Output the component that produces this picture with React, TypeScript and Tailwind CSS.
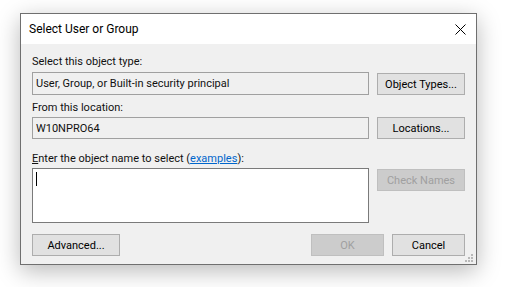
import React from 'react';

const font = { fontFamily: 'Roboto, "Liberation Sans", sans-serif' };

function Button({ label, disabled, className }: { label: React.ReactNode; disabled?: boolean; className?: string }) {
  return (
    <div
      className={
        'flex items-center justify-center border text-[11px] leading-none ' +
        (disabled
          ? 'bg-[#cccccc] border-[#bfbfbf] text-[#a0a0a0] '
          : 'bg-[#e1e1e1] border-[#adadad] text-black ') +
        (className ?? '')
      }
    >
      {label}
    </div>
  );
}

function ResizeGrip() {
  const dots = [
    [6, 0],
    [3, 3],
    [6, 3],
    [0, 6],
    [3, 6],
    [6, 6],
  ];
  return (
    <svg width="8" height="8" className="absolute right-[3px] bottom-[2px]">
      {dots.map(([x, y]) => (
        <rect key={`${x}-${y}`} x={x} y={y} width="2" height="2" fill="#b8b8b8" />
      ))}
    </svg>
  );
}

export default function App() {
  return (
    <div className="w-[512px] h-[287px] bg-white overflow-hidden pt-[13px] pl-[20px]" style={font}>
      <div className="relative w-[457px] h-[252px] border border-[#6f6f6f] bg-[#f0f0f0] shadow-[0_6px_22px_rgba(0,0,0,0.28)] flex flex-col">
        {/* title bar */}
        <div className="h-[30px] bg-white flex items-center justify-between pl-[8px] pr-[8px]">
          <span className="text-[12px] text-black">Select User or Group</span>
          <svg width="11" height="11" viewBox="0 0 11 11" className="mr-[2px]">
            <path d="M0.5 0.5 L10.5 10.5 M10.5 0.5 L0.5 10.5" stroke="#000" strokeWidth="1" />
          </svg>
        </div>

        <div className="flex flex-col px-[11px] pt-[10px] text-[11px] text-[#111]">
          <div className="leading-[15px]">Select this object type:</div>
          <div className="mt-[3px] flex gap-[8px]">
            <div className="w-[337px] h-[23px] border border-[#a0a0a0] bg-[#f0f0f0] flex items-center px-[3px] leading-none">
              User, Group, or Built-in security principal
            </div>
            <Button label="Object Types..." className="w-[88px] h-[22px] mt-[1px]" />
          </div>

          <div className="mt-[5px] leading-[15px]">From this location:</div>
          <div className="mt-[2px] flex gap-[8px]">
            <div className="w-[337px] h-[22px] border border-[#a0a0a0] bg-[#f0f0f0] flex items-center px-[3px] leading-none">
              W10NPRO64
            </div>
            <Button label="Locations..." className="w-[88px] h-[22px]" />
          </div>

          <div className="mt-[12px] leading-[15px]">
            <span className="underline">E</span>nter the object name to select (
            <span className="text-[#0066cc] underline">examples</span>):
          </div>
          <div className="mt-[2px] flex gap-[8px] items-start">
            <div className="w-[337px] h-[55px] border border-[#7a7a7a] bg-white pl-[3px] pt-[3px]">
              <div className="w-px h-[14px] bg-black" />
            </div>
            <Button label="Check Names" disabled className="w-[88px] h-[22px] mt-[1px]" />
          </div>

          <div className="mt-[11px] flex items-center">
            <Button label="Advanced..." className="w-[88px] h-[22px]" />
            <div className="flex-1" />
            <Button label="OK" disabled className="w-[73px] h-[22px]" />
            <Button label="Cancel" className="w-[73px] h-[22px] ml-[8px]" />
          </div>
        </div>

        <ResizeGrip />
      </div>
    </div>
  );
}
